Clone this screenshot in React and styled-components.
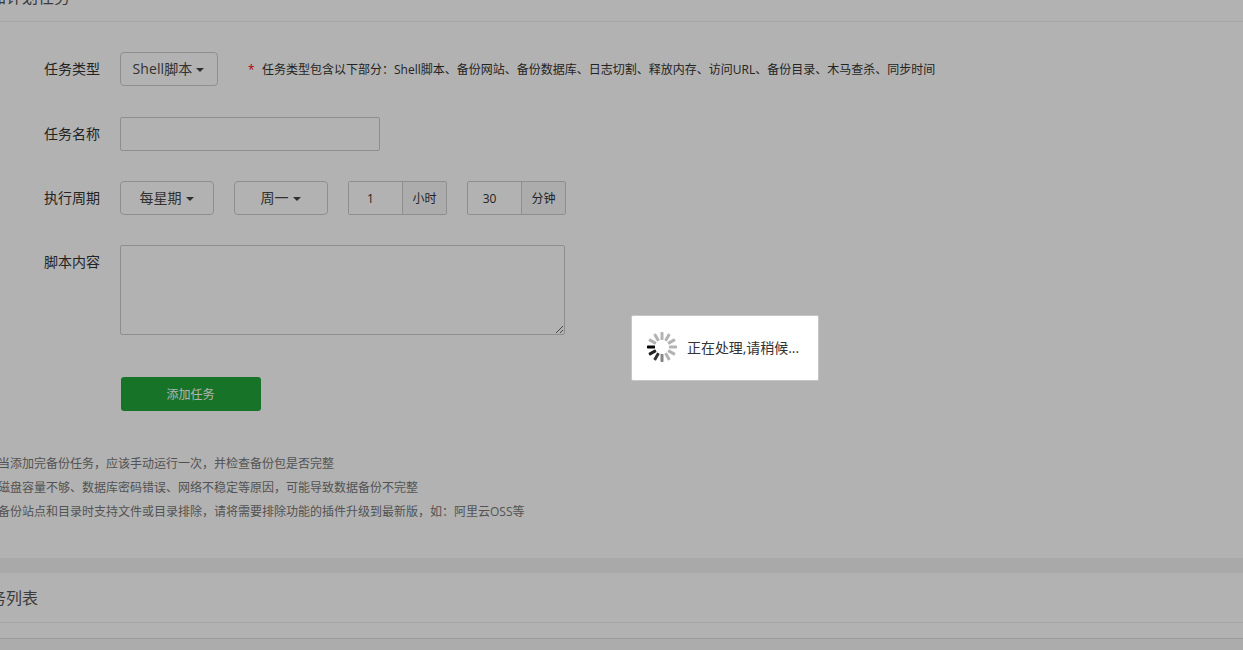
import styled, { createGlobalStyle } from "styled-components";
import { useState } from "react";

const GlobalStyle = createGlobalStyle`
* {
  box-sizing: border-box;
}

html, body {
  margin: 0;
  height: 100%;
  overflow: hidden;
  background-color: #f2f2f2;
}

body, button, input, textarea {
  font-family: "Open Sans", "Noto Sans CJK SC", sans-serif;
  font-size: 12px;
  color: #333;
}
`;

// the page is scrolled a little down and to the right
const Page = styled.main`
display: flex;
flex-direction: column;
gap: 15px;
margin: -28px 0 0 -46px;
`;

const Panel = styled.section`
background-color: #fff;
height: ${(props) => props.$height};
`;

const PanelTitle = styled.h3`
margin: 0;
height: 50px;
padding-left: 20px;
border-bottom: 1px solid #eee;
font-size: 16px;
font-weight: 400;
line-height: 50px;
color: #555;
`;

const Form = styled.form`
display: flex;
flex-direction: column;
padding: 30px 0 0 46px;
`;

const Row = styled.div`
display: flex;
align-items: flex-start;
margin-bottom: ${(props) => props.$space || "30px"};
`;

const Label = styled.span`
width: 100px;
margin-right: 20px;
font-size: 14px;
line-height: 34px;
text-align: right;
`;

const Controls = styled.div`
display: flex;
gap: 20px;
`;

const DropButton = styled.button`
display: flex;
align-items: center;
justify-content: center;
width: ${(props) => props.$width || "94px"};
height: 34px;
padding: 0 1px 2px 0;
border: 1px solid #ccc;
border-radius: 4px;
background-color: #fff;
color: #484848;
font-size: 14px;
letter-spacing: ${(props) => props.$tracking || "0"};
cursor: pointer;
`;

const Caret = styled.span`
margin: 4px 0 0 4px;
border-top: 4px solid #444;
border-right: 4px solid transparent;
border-left: 4px solid transparent;
`;

const Hint = styled.span`
display: flex;
margin-left: 30px;
line-height: 36px;
height: 34px;
white-space: nowrap;
`;

const Star = styled.span`
width: 14px;
color: #f00;
`;

const TextInput = styled.input`
width: 260px;
height: 34px;
padding: 0 10px;
border: 1px solid #ccc;
border-radius: 2px;
background-color: #fff;
outline: 0;
`;

const NumberGroup = styled.label`
display: flex;
width: 99px;
height: 34px;
border: 1px solid #ccc;
border-radius: 2px;
`;

const NumberInput = styled.input`
width: 53px;
padding: 0 10px 0 0;
border: 0;
background-color: #fff;
text-align: center;
outline: 0;
`;

const Unit = styled.span`
flex: 1;
border-left: 1px solid #ccc;
background-color: #f7f7f7;
line-height: 34px;
height: 32px;
text-align: center;
`;

const ScriptArea = styled.textarea`
display: block;
width: 445px;
height: 90px;
padding: 5px 10px;
border: 1px solid #ccc;
border-radius: 2px;
background-color: #fff;
outline: 0;
resize: both;
`;

const SubmitButton = styled.button`
width: 140px;
height: 34px;
margin-left: 121px;
padding: 2px 1px 0 0;
border: 0;
border-radius: 3px;
background-color: #20a53a;
color: #fff;
line-height: 32px;
cursor: pointer;
`;

const Tips = styled.ul`
margin: 41px 0 0;
padding: 0 0 0 44px;
list-style: none;
line-height: 24px;
color: #777;
`;

const TableHead = styled.div`
height: 12px;
margin-top: 15px;
border-top: 1px solid #ddd;
background-color: #f6f6f6;
`;

const Shade = styled.div`
position: fixed;
inset: 0;
background-color: rgba(0, 0, 0, 0.3);
`;

const Loading = styled.div`
position: fixed;
top: 315px;
left: 631px;
display: flex;
align-items: center;
width: 188px;
height: 66px;
padding: 0 0 2px 14px;
border: 1px solid #c6c6c6;
border-radius: 2px;
background-color: #fff;
font-size: 14px;
letter-spacing: -0.05px;
white-space: nowrap;
`;

const SpinnerIcon = styled.svg`
width: 32px;
height: 32px;
margin-right: 9px;
`;

const spokes = [
    "#b3b3b3", "#b3b3b3", "#b3b3b3", "#b3b3b3", "#b3b3b3", "#b3b3b3",
    "#858585", "#333", "#222", "#000", "#b3b3b3", "#b3b3b3",
];

const tips = [
    "当添加完备份任务,应该手动运行一次,并检查备份包是否完整",
    "磁盘容量不够、数据库密码错误、网络不稳定等原因,可能导致数据备份不完整",
    "备份站点和目录时支持文件或目录排除,请将需要排除功能的插件升级到最新版,如:阿里云OSS等",
].map((tip) => tip.replaceAll(",", "\uff0c").replaceAll(":", "\uff1a"));

function Spinner() {
    return (
        <SpinnerIcon viewBox="-16 -16 32 32">
            {spokes.map((color, i) => (
                <rect key={i} x="-1.5" y="-15" width="3" height="8" rx="0.7" fill={color} transform={`rotate(${i * 30})`} />
            ))}
        </SpinnerIcon>
    );
}

function App() {
    const [name, setName] = useState("");
    const [hour, setHour] = useState("1");
    const [minute, setMinute] = useState("30");
    const [script, setScript] = useState("");

    return (<>
        <GlobalStyle />
        <Page>
            <Panel $height="586px">
                <PanelTitle>添加计划任务</PanelTitle>
                <Form onSubmit={(e) => e.preventDefault()}>
                    <Row $space="31px">
                        <Label>任务类型</Label>
                        <DropButton type="button" $width="98px" $tracking="0.1px">Shell脚本<Caret /></DropButton>
                        <Hint><Star>*</Star>任务类型包含以下部分{"\uff1a"}Shell脚本、备份网站、备份数据库、日志切割、释放内存、访问URL、备份目录、木马查杀、同步时间</Hint>
                    </Row>
                    <Row>
                        <Label>任务名称</Label>
                        <TextInput value={name} onChange={(e) => setName(e.target.value)} />
                    </Row>
                    <Row>
                        <Label>执行周期</Label>
                        <Controls>
                            <DropButton type="button">每星期<Caret /></DropButton>
                            <DropButton type="button">周一<Caret /></DropButton>
                            <NumberGroup>
                                <NumberInput value={hour} onChange={(e) => setHour(e.target.value)} />
                                <Unit>小时</Unit>
                            </NumberGroup>
                            <NumberGroup>
                                <NumberInput value={minute} onChange={(e) => setMinute(e.target.value)} />
                                <Unit>分钟</Unit>
                            </NumberGroup>
                        </Controls>
                    </Row>
                    <Row $space="42px">
                        <Label>脚本内容</Label>
                        <ScriptArea value={script} onChange={(e) => setScript(e.target.value)} />
                    </Row>
                    <SubmitButton type="submit">添加任务</SubmitButton>
                </Form>
                <Tips>
                    {tips.map((tip) => <li key={tip}>{tip}</li>)}
                </Tips>
            </Panel>
            <Panel $height="77px">
                <PanelTitle>任务列表</PanelTitle>
                <TableHead />
            </Panel>
        </Page>
        <Shade />
        <Loading>
            <Spinner />
            正在处理,请稍候...
        </Loading>
    </>);
}

export default App;
